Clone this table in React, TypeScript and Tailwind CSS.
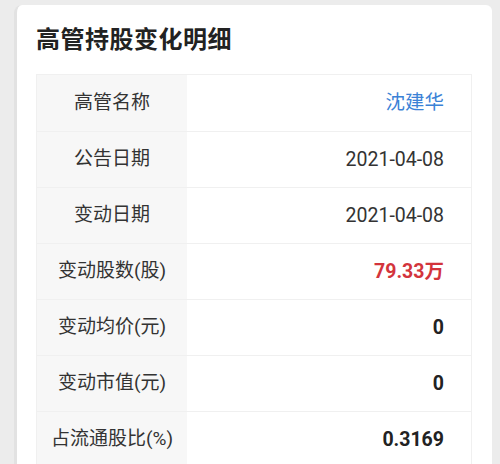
import React from "react";

type Row = {
  label: string;
  value: string;
  tone?: "link" | "red" | "bold";
};

const rows: Row[] = [
  { label: "高管名称", value: "沈建华", tone: "link" },
  { label: "公告日期", value: "2021-04-08" },
  { label: "变动日期", value: "2021-04-08" },
  { label: "变动股数(股)", value: "79.33万", tone: "red" },
  { label: "变动均价(元)", value: "0", tone: "bold" },
  { label: "变动市值(元)", value: "0", tone: "bold" },
  { label: "占流通股比(%)", value: "0.3169", tone: "bold" },
];

const valueClass = (tone?: Row["tone"]) => {
  if (tone === "link") return "text-[#3b82d6]";
  if (tone === "red") return "text-[#d3343c] font-bold";
  if (tone === "bold") return "text-[#222] font-bold";
  return "text-[#333]";
};

export default function App() {
  return (
    <div
      className="w-[500px] h-[464px] overflow-hidden bg-[#ececec] pl-[14px] pr-[8px] pt-[5px]"
      style={{ fontFamily: 'Roboto, "Noto Sans CJK SC", sans-serif' }}
    >
      <div className="h-full bg-white rounded-tl-lg rounded-tr-md border-l-[3px] border-l-[#e2e2e2] pl-[19px] pr-[20px]">
        <div className="h-[69px] flex items-center">
          <h1 className="text-[24px] font-bold text-[#222] tracking-[0.5px]">高管持股变化明细</h1>
        </div>
        <div className="border border-[#f0f0f0]">
          {rows.map((row, i) => (
            <div
              key={row.label}
              className={`grid grid-cols-[150px_1fr] h-[56px] ${i > 0 ? "border-t border-[#f0f0f0]" : ""}`}
            >
              <div className="bg-[#f7f7f7] flex items-center justify-center text-[19px] text-[#333]">
                {row.label}
              </div>
              <div className={`flex items-center justify-end pr-[27px] text-[19.5px] ${valueClass(row.tone)}`}>
                {row.value}
              </div>
            </div>
          ))}
        </div>
      </div>
    </div>
  );
}
